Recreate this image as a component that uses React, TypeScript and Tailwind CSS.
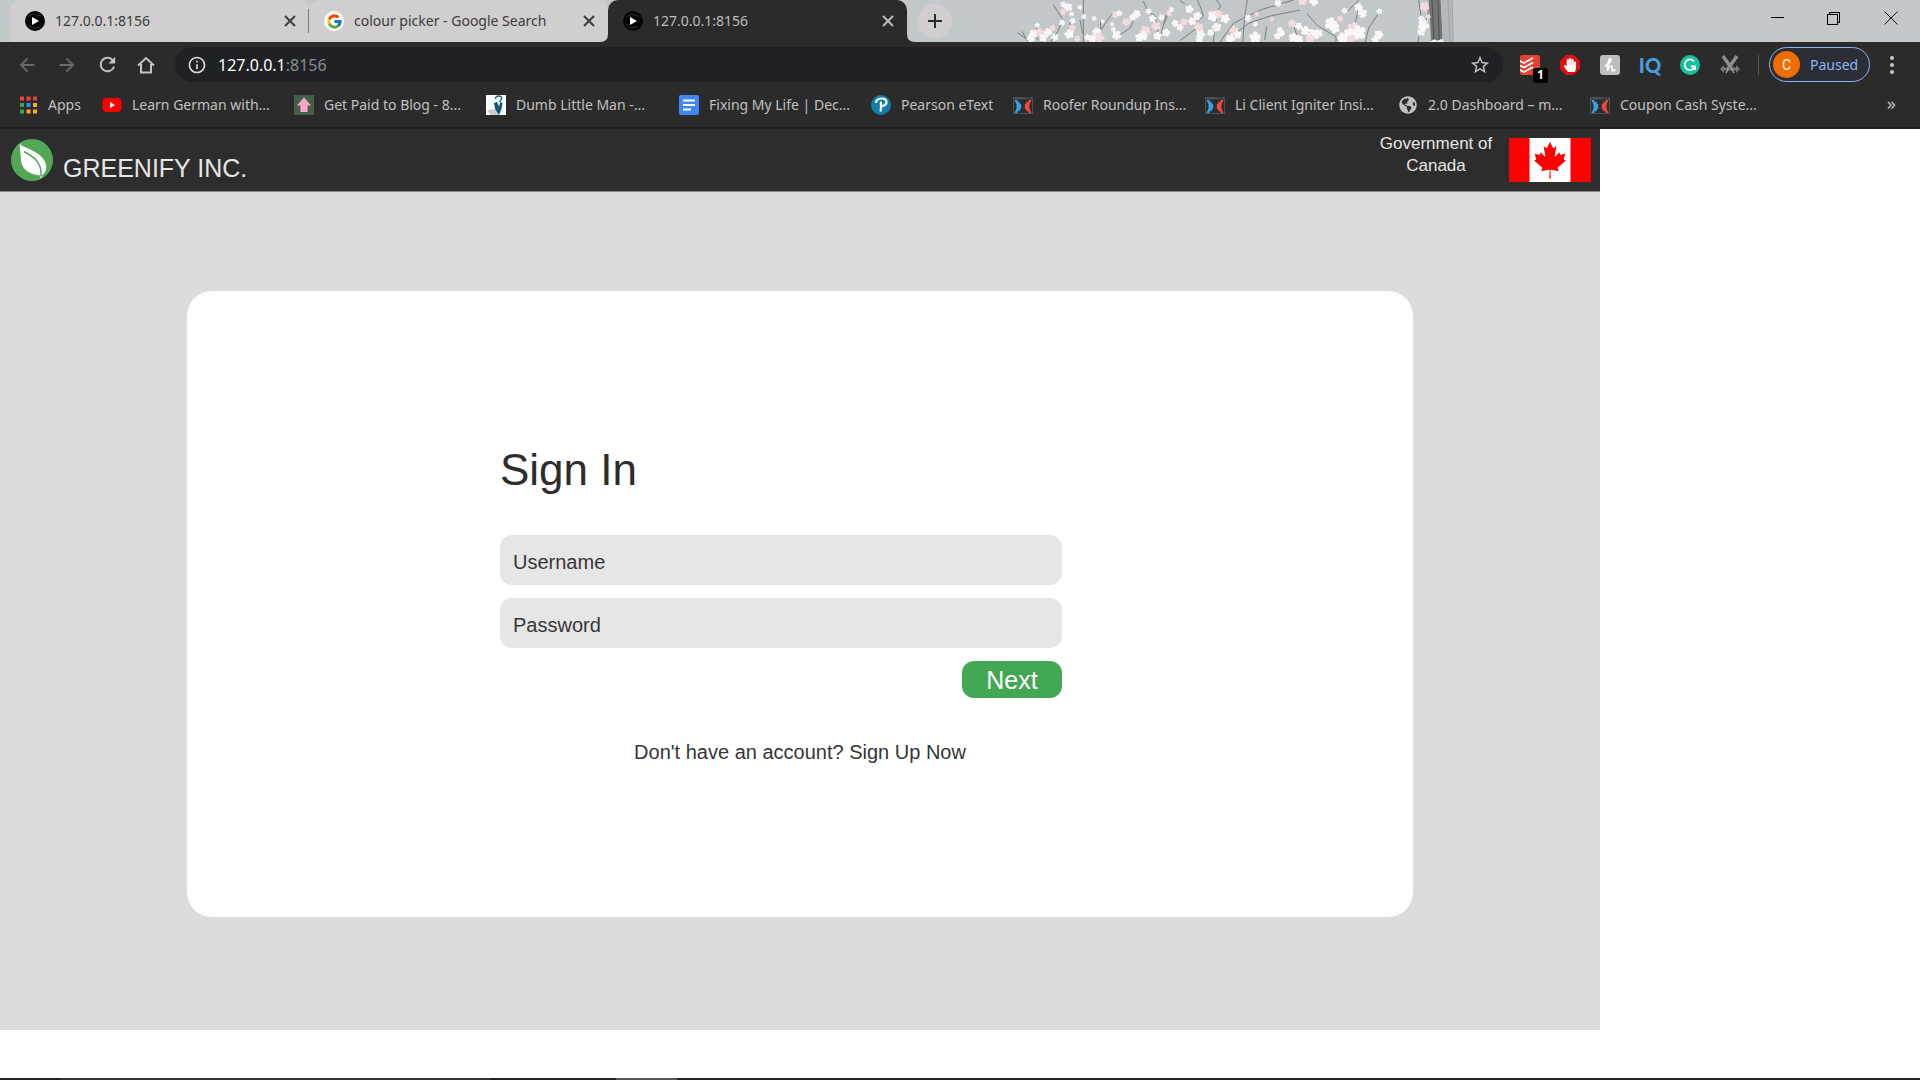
import { FcGoogle } from "react-icons/fc";
import { FaHandPaper, FaGlobeAmericas } from "react-icons/fa";
import { MdArrowBack, MdArrowForward, MdRefresh, MdOutlineInfo, MdStarBorder } from "react-icons/md";

const tabs = [
  { title: "127.0.0.1:8156", icon: <PlayIcon />, active: false },
  { title: "colour picker - Google Search", icon: <GoogleIcon />, active: false },
  { title: "127.0.0.1:8156", icon: <PlayIcon />, active: true },
];

const bookmarks = [
  { label: "Apps", icon: <AppsIcon />, width: "w-[82px]" },
  { label: "Learn German with...", icon: <YoutubeIcon />, width: "w-[192px]" },
  { label: "Get Paid to Blog - 8...", icon: <ArrowUpIcon />, width: "w-[192px]" },
  { label: "Dumb Little Man -...", icon: <ManIcon />, width: "w-[193px]" },
  { label: "Fixing My Life | Dec...", icon: <DocsIcon />, width: "w-[192px]" },
  { label: "Pearson eText", icon: <PearsonIcon />, width: "w-[142px]" },
  { label: "Roofer Roundup Ins...", icon: <FunnelIcon />, width: "w-[192px]" },
  { label: "Li Client Igniter Insi...", icon: <FunnelIcon />, width: "w-[193px]" },
  {
    label: "2.0 Dashboard – m...",
    icon: <FaGlobeAmericas className="h-[18px] w-5 text-[#c0c0c0]" />,
    width: "w-[192px]",
  },
  { label: "Coupon Cash Syste...", icon: <FunnelIcon />, width: "w-[192px]" },
];

function PlayIcon() {
  return (
    <svg viewBox="0 0 20 20" className="size-5 shrink-0">
      <circle cx="10" cy="10" r="10" fill="#050505" />
      <path d="M3 6l5-3 8 2M3 13l4 4 8-1" stroke="#2c2c2c" fill="none" />
      <path d="M7 6l7 4-7 4z" fill="#fff" />
    </svg>
  );
}

function GoogleIcon() {
  return (
    <span className="flex size-5 shrink-0 items-center justify-center rounded-full bg-white">
      <FcGoogle className="size-[17px]" />
    </span>
  );
}

function AppsIcon() {
  const colors = ["#ea4335", "#ea4335", "#ea4335", "#34a853", "#2f8df5", "#fbaf10", "#34a853", "#fbaf10", "#fbaf10"];
  return (
    <svg viewBox="0 0 18 18" className="size-[18px] shrink-0">
      {colors.map((c, i) => (
        <rect key={i} x={(i % 3) * 6.5} y={Math.floor(i / 3) * 6.5 + 0.5} width="4" height="4" fill={c} />
      ))}
    </svg>
  );
}

function YoutubeIcon() {
  return (
    <svg viewBox="0 0 20 20" className="size-5 shrink-0">
      <rect x="0.5" y="3" width="19" height="14" rx="4" fill="#f00" />
      <path d="M8 7l5 3-5 3z" fill="#fff" />
    </svg>
  );
}

function ArrowUpIcon() {
  return (
    <svg viewBox="0 0 20 20" className="size-5 shrink-0">
      <path d="M0 0h20v20H0z" fill="#45604a" />
      <path d="M10 2.500l7 8h-3.500V17h-7v-6.500H3z" fill="#ffa9c6" />
    </svg>
  );
}

function ManIcon() {
  return (
    <svg viewBox="0 0 20 20" className="size-5 shrink-0">
      <path d="M0 0h20v20H0z" fill="#fff" />
      <path d="M1 16q3-3 9-1l3 5H5z" fill="#ccc" />
      <path d="M9.500 4q0-3 3-3 3.500 0 3 3-.5 2-2.500 3" stroke="#1b6584" strokeWidth="1.300" fill="none" />
      <path d="M8 8l3-1 2 3 1.500-3 2 1-1 6-2.500 6-4-6z" fill="#12577a" />
      <path d="M11.500 7.500h2.500l-1 4z" fill="#fff" />
    </svg>
  );
}

function DocsIcon() {
  return (
    <svg viewBox="0 0 20 20" className="size-5 shrink-0">
      <rect width="20" height="20" rx="2" fill="#4285f4" />
      <path d="M4 5.500h12M4 10h12M4 14.500h8" stroke="#fff" strokeWidth="2" />
    </svg>
  );
}

function PearsonIcon() {
  return (
    <svg viewBox="0 0 20 20" className="size-5 shrink-0">
      <circle cx="10" cy="10" r="10" fill="#117fa5" />
      <path
        d="M5 8q0-4.500 6-4.500 4.500 0 4.500 3.600 0 3.400-5 4.200M9.800 6.500q.6 5-.3 10"
        stroke="#fff"
        strokeWidth="2.200"
        fill="none"
      />
    </svg>
  );
}

function FunnelIcon() {
  return (
    <svg viewBox="0 0 20 20" className="size-5 shrink-0">
      <path d="M0 2h20v17H0z" fill="#4c4f53" />
      <path d="M1 4.500h18V18H1z" fill="#2b2d30" />
      <path d="M13 3h1M15 3h1M17 3h1" stroke="#222" />
      <path d="M1.500 5H4l1 2 1.500-.3.500 2 1.500 1-.5 1.800.5 1.800-1.500 1-.5 2-1.500-.3-1 2H1.500l2-4.500v-4z" fill="#3da0e0" />
      <path d="M18.500 5H16l-1 2-1.500-.3-.5 2-1.500 1 .5 1.800-.5 1.800 1.500 1 .5 2 1.500-.3 1 2h2.500l-2-4.500v-4z" fill="#ee4b35" />
    </svg>
  );
}

// Theme artwork behind the tab strip
function Blossoms() {
  const petals = [
    [-7, -3],
    [1, -8],
    [8, -2],
    [4, 7],
    [-5, 5],
    [0, 0],
  ];
  const flowers = [
    [112, 76, 5], [100, 102, 9], [118, 96, 8], [92, 116, 8], [130, 112, 8], [145, 96, 8], [158, 84, 6], [165, 112, 7],
    [190, 14, 6], [205, 22, 8], [190, 36, 6], [214, 42, 5], [186, 68, 6], [218, 62, 6], [216, 84, 7], [208, 102, 9],
    [240, 22, 5], [252, 50, 5], [232, 116, 6], [262, 112, 6], [282, 56, 5], [290, 96, 9], [298, 112, 10], [276, 116, 8],
    [308, 64, 4], [336, 72, 4], [346, 44, 7], [358, 40, 6], [350, 106, 9], [340, 88, 5], [378, 66, 8], [398, 52, 7],
    [410, 42, 8], [418, 112, 8], [436, 92, 10], [430, 108, 9], [446, 34, 6], [458, 56, 7], [468, 78, 9], [472, 108, 8],
    [484, 52, 6], [498, 98, 8], [506, 40, 6], [514, 28, 5], [526, 70, 7], [540, 82, 7], [552, 66, 7], [568, 28, 8],
    [576, 64, 8], [592, 48, 8], [596, 82, 9], [602, 104, 9], [598, 120, 7], [640, 48, 11], [656, 42, 8], [676, 56, 9],
    [650, 82, 9], [632, 98, 7], [702, 92, 9], [690, 116, 9], [712, 104, 8], [744, 54, 7], [770, 42, 5], [766, 72, 5],
    [766, 112, 11], [834, 10, 7], [816, 58, 4], [840, 90, 6], [832, 108, 7], [846, 100, 6], [876, 70, 8], [896, 78, 7],
    [880, 112, 9], [896, 118, 9], [908, 4, 8], [942, 4, 9], [916, 92, 9], [940, 104, 11], [930, 116, 9], [956, 100, 8],
    [992, 70, 12], [1004, 84, 10], [1020, 56, 6], [1034, 32, 6], [1076, 22, 8], [1088, 40, 9], [1060, 86, 12],
    [1076, 98, 14], [1046, 100, 10], [1028, 114, 11], [1052, 116, 8], [1138, 34, 6], [1136, 104, 9], [1126, 118, 7],
    [1274, 20, 9], [1264, 56, 6], [1270, 76, 11], [1264, 96, 8], [1284, 50, 5],
  ];
  return (
    <svg viewBox="0 0 1380 126" className="ml-12 h-[42px] w-[460px] shrink-0">
      <path
        d="M52 98l40 28M66 94l18 32M110 80l2 40M160 14l28 44-14 36-22 32M250 0v126M212 60l-8 40M240 60l8 40M302 62v30l16-26 20-26M350 112l40-28 20-40M430 4l14 30 22 14 8 60M500 40l-16 60M510 30l-18 40M538 0l16 12M592 0l12 28 6 20-16 16M540 122l48-36M640 126l10-80M650 0l12 18-10 16M660 126l40-56 80-40 100-30M690 110l60-42 60-20 90-18M742 0l-8 50-6 76M800 80l-6 40M880 70l14 50M920 40l34 38 54 32v16M1076 0l-34 34M1076 24l-16 70M1142 30l-36 54-10 42M1256 0l10 70-12 56M1286 30l-16 70"
        fill="none"
        stroke="#6b7072"
        strokeWidth="2.500"
      />
      <path d="M1286 0h36l6 126h-34z" fill="#737475" />
      <path d="M1296 0l6 126M1314 0l4 126" stroke="#4e4f50" strokeWidth="3" />
      <path d="M1324 0h34v126h-30z" fill="#b4b8ba" />
      <path d="M1344 0l6 126M1356 0l4 126" stroke="#94989a" strokeWidth="2" />
      {flowers.map(([x, y, r], i) => (
        <g
          key={i}
          transform={`translate(${x} ${y}) scale(${r / 8}) rotate(${i * 37})`}
          fill={i % 4 === 2 ? "#f6dcdf" : "#fbf8f9"}
        >
          {petals.map(([px, py], k) => (
            <circle key={k} cx={px} cy={py} r="5" />
          ))}
        </g>
      ))}
      <path d="M1290 126l12-8 10 4 14-6 6 10z" fill="#f4f4f4" />
    </svg>
  );
}

function TabStrip() {
  return (
    <div className="flex h-[42px] items-stretch overflow-hidden bg-gradient-to-b from-[#c3c7ca] to-[#c3c8c9] pl-[10px]">
      <div role="tablist" className="flex">
        {tabs.map((tab, i) => (
          <div
            key={i}
            role="tab"
            aria-selected={tab.active}
            className={`relative flex w-[299px] items-center rounded-t-[10px] pr-[7px] pl-[15px] text-sm ${
              tab.active ? "z-10 bg-[#2b2b2b] text-[#bdbdbd]" : "bg-[#d0cece] text-[#3c3c3c]"
            }`}
          >
            {tab.active && (
              <>
                <svg viewBox="0 0 8 8" className="absolute bottom-0 -left-2 size-2">
                  <path d="M8 0v8H0q8 0 8-8" fill="#2b2b2b" />
                </svg>
                <svg viewBox="0 0 8 8" className="absolute -right-2 bottom-0 size-2">
                  <path d="M0 0v8h8q-8 0-8-8" fill="#2b2b2b" />
                </svg>
              </>
            )}
            {tab.icon}
            <span className="ml-[10px] flex-1 truncate">{tab.title}</span>
            <button aria-label="Close tab" className="flex size-6 items-center justify-center">
              <svg viewBox="0 0 12 12" className="size-3" stroke="currentColor" strokeWidth="2">
                <path d="M1 1l10 10M11 1L1 11" />
              </svg>
            </button>
            {i === 0 && <span className="absolute right-0 h-6 w-px bg-[#7a7a7a]" />}
          </div>
        ))}
      </div>
      <button
        aria-label="New tab"
        className="mt-1 ml-[11px] flex size-[34px] items-center justify-center rounded-full bg-[#d0cece]"
      >
        <svg viewBox="0 0 16 16" className="size-4" stroke="#2b2b2b" strokeWidth="2">
          <path d="M8 1v14M1 8h14" />
        </svg>
      </button>
      <Blossoms />
      <div className="ml-auto flex h-9">
        <button aria-label="Minimize" className="flex w-14 items-center justify-center">
          <svg viewBox="0 0 14 14" className="size-[14px]" stroke="#000" shapeRendering="crispEdges">
            <path d="M0 6.500h13" />
          </svg>
        </button>
        <button aria-label="Restore" className="flex w-14 items-center justify-center">
          <svg viewBox="0 0 14 14" className="size-[14px]" stroke="#000" fill="none" shapeRendering="crispEdges">
            <path d="M.5 3.500h10v10H.5zM2.500 3.500v-2h10v10h-2" />
          </svg>
        </button>
        <button aria-label="Close" className="mr-px flex w-[57px] items-center justify-center">
          <svg viewBox="0 0 14 14" className="size-[14px]" stroke="#111">
            <path d="M.5.500l13 13M13.500.500l-13 13" />
          </svg>
        </button>
      </div>
    </div>
  );
}

function Extensions() {
  return (
    <div className="flex items-center gap-5">
      <button aria-label="Todoist" className="relative size-5">
        <svg viewBox="0 0 20 20" className="size-5">
          <rect width="20" height="20" rx="2" fill="#e44332" />
          <path d="M0 6l4 2 9-5M0 10.500l4 2 9-5M0 15l4 2 9-5" stroke="#fff" strokeWidth="1.600" fill="none" />
        </svg>
        <span className="absolute top-[13px] left-[13px] flex h-[15px] w-[15px] items-center justify-center rounded-[3px] bg-black text-xs font-bold text-white">
          1
        </span>
      </button>
      <button aria-label="AdBlock" className="relative flex size-5 items-center justify-center">
        <svg viewBox="0 0 20 20" className="absolute inset-0 size-5">
          <path d="M6 0h8l6 6v8l-6 6H6l-6-6V6z" fill="#e40d0d" />
        </svg>
        <FaHandPaper className="relative size-[14px] text-white" />
      </button>
      <button aria-label="Honey">
        <svg viewBox="0 0 20 20" className="size-5">
          <rect width="20" height="20" rx="3" fill="#bdbdbd" />
          <path
            d="M5 11q5-2 6-6 0-2-1.500-1-2 3-2 12 1-5 3.500-5 1.500 0 1 2.500-.5 2.500 1 2.500 1.500 0 2-2"
            stroke="#fff"
            strokeWidth="1.700"
            fill="none"
          />
        </svg>
      </button>
      <button
        aria-label="Keywords"
        className="flex size-5 items-center justify-center font-['Lato'] text-xl leading-5 font-black text-[#4b9cdb]"
      >
        IQ
      </button>
      <button aria-label="Grammarly">
        <svg viewBox="0 0 20 20" className="size-5">
          <circle cx="10" cy="10" r="10" fill="#15c39a" />
          <path d="M14 6.300A5.300 5.300 0 1 0 15 11.500h-4M15 11v4" stroke="#fff" strokeWidth="1.800" fill="none" />
        </svg>
      </button>
      <button aria-label="Snip">
        <svg viewBox="0 0 20 20" className="size-5">
          <path d="M3 1l9 13M17 1L8 14" stroke="#8f8f8f" strokeWidth="3.500" />
          <path d="M0 14l4-4v2.500h12V10l4 4-4 4v-2.500H4V18z" fill="#777" />
          <path d="M8.500 13.500L6 18M11.500 13.500L14 18" stroke="#a5a5a5" strokeWidth="1.500" />
        </svg>
      </button>
    </div>
  );
}

function Toolbar() {
  return (
    <div className="flex h-[45px] items-center pr-[26px] pl-4 text-[#c4c4c4]">
      <div className="flex items-center gap-[18px]">
        <button aria-label="Back">
          <MdArrowBack className="size-[22px] text-[#6b6b6b]" />
        </button>
        <button aria-label="Forward">
          <MdArrowForward className="size-[22px] text-[#6b6b6b]" />
        </button>
        <button aria-label="Reload">
          <MdRefresh className="size-[23px]" />
        </button>
        <button aria-label="Home">
          <svg viewBox="0 0 18 18" className="size-[18px]" fill="none" stroke="currentColor" strokeWidth="2">
            <path d="M1 9.500L9 2l8 7.500M4 8v8.500h10V8" />
          </svg>
        </button>
      </div>
      <div className="ml-5 flex h-[35px] flex-1 items-center rounded-full bg-[#202124] pr-3 pl-3">
        <MdOutlineInfo className="size-5 shrink-0 text-[#dcdcdc]" />
        <div className="ml-[11px] flex-1 text-base">
          <span className="text-white">127.0.0.1</span>
          <span className="text-[#8b8c8e]">:8156</span>
        </div>
        <button aria-label="Bookmark this page">
          <MdStarBorder className="size-[22px]" />
        </button>
      </div>
      <div className="ml-[17px]">
        <Extensions />
      </div>
      <span className="ml-[18px] h-5 w-px bg-[#565656]" />
      <button className="ml-[10px] flex h-[35px] w-[101px] items-center rounded-full border border-[#8ab4f8] bg-[#2b2e35] pl-[3px] text-[#8ab4f8]">
        <span className="flex size-[27px] items-center justify-center rounded-full bg-[#ef6c00] font-['Roboto'] text-sm text-white">
          C
        </span>
        <span className="ml-[10px] text-sm">Paused</span>
      </button>
      <button aria-label="Menu" className="ml-5">
        <svg viewBox="0 0 4 18" className="h-[18px] w-1" fill="currentColor">
          <circle cx="2" cy="2" r="2" />
          <circle cx="2" cy="9" r="2" />
          <circle cx="2" cy="16" r="2" />
        </svg>
      </button>
    </div>
  );
}

function BookmarksBar() {
  return (
    <div className="flex h-[42px] items-center border-b-2 border-[#202020] pr-6 pb-1 pl-5 text-sm text-[#c0c0c0]">
      {bookmarks.map((b) => (
        <a key={b.label} href="#" className={`flex shrink-0 items-center gap-[10px] whitespace-nowrap ${b.width}`}>
          {b.icon}
          {b.label}
        </a>
      ))}
      <button aria-label="More bookmarks" className="ml-auto pb-1 text-lg leading-5">
        »
      </button>
    </div>
  );
}

function LeafLogo() {
  return (
    <svg viewBox="0 0 42 42" className="size-[42px]">
      <circle cx="21" cy="21" r="21" fill="#52a854" />
      <path
        d="M8.500 4.500C11 9 26 10 33 21c4 6 2.500 12-2 15.500l-.5 2.500h-1l0-2.500C20 36 11 31 10 22 9.500 15 9 9 8.500 4.500z"
        fill="#fff"
      />
      <path d="M13 12.500c9 5 18 10 17 24.500" stroke="#52a854" strokeWidth="1.500" fill="none" />
    </svg>
  );
}

function CanadaFlag() {
  return (
    <svg viewBox="0 0 9600 4800" preserveAspectRatio="none" className="h-11 w-[82px]" role="img" aria-label="Canada">
      <path d="M0 0h9600v4800H0z" fill="#f00" />
      <path
        d="m2400 0h4800v4800h-4800zm2490 4430-45-863a95 95 0 0 1 111-98l859 151-116-320a65 65 0 0 1 20-73l941-762-212-99a65 65 0 0 1-34-79l186-572-542 115a65 65 0 0 1-73-38l-105-247-423 454a65 65 0 0 1-111-57l204-1052-327 189a65 65 0 0 1-91-27l-332-652-332 652a65 65 0 0 1-91 27l-327-189 204 1052a65 65 0 0 1-111 57l-423-454-105 247a65 65 0 0 1-73 38l-542-115 186 572a65 65 0 0 1-34 79l-212 99 941 762a65 65 0 0 1 20 73l-116 320 859-151a95 95 0 0 1 111 98l-45 863z"
        fill="#fff"
      />
    </svg>
  );
}

function SignInPage() {
  return (
    <div className="w-5/6 bg-[#dcdcdc] pb-[113px] font-['Liberation_Sans',sans-serif]">
      <header className="flex h-[63px] items-center border-b border-[#8c8c8c] bg-[#2d2d2d] pr-[9px] pl-[11px] text-[#e6e6e6]">
        <LeafLogo />
        <span className="ml-[10px] self-end pb-[9px] text-[25px] leading-7">GREENIFY INC.</span>
        <span className="ml-auto w-[120px] self-start pt-1 text-center text-[17px] leading-[22px]">
          Government of Canada
        </span>
        <span className="ml-[13px]">
          <CanadaFlag />
        </span>
      </header>
      <main className="mx-auto mt-[99px] min-h-[626px] max-w-[1226px] rounded-[25px] bg-white pt-[155px]">
        <form className="ml-[313px] w-[562px]" onSubmit={(e) => e.preventDefault()}>
          <h1 className="text-[44px] leading-12 text-[#2d2d2d]">Sign In</h1>
          <div className="mt-[41px] flex flex-col gap-[13px] text-xl">
            <input
              type="text"
              placeholder="Username"
              aria-label="Username"
              className="h-[50px] rounded-[12px] bg-[#e6e6e6] px-[13px] pt-[5px] text-[#2d2d2d] placeholder:text-[#363636]"
            />
            <input
              type="password"
              placeholder="Password"
              aria-label="Password"
              className="h-[50px] rounded-[12px] bg-[#e6e6e6] px-[13px] pt-[5px] text-[#2d2d2d] placeholder:text-[#363636]"
            />
            <button
              type="submit"
              className="h-[37px] w-[100px] self-end rounded-[12px] bg-[#43a853] text-[25px] leading-7 text-white"
            >
              Next
            </button>
          </div>
        </form>
        <p className="mt-10 text-center text-xl text-[#363636]">
          Don't have an account? <a href="#">Sign Up Now</a>
        </p>
      </main>
    </div>
  );
}

export default function App() {
  return (
    <div className="flex min-h-screen flex-col bg-white">
      <div className="bg-[#2b2b2b] font-['Noto_Sans',sans-serif]">
        <TabStrip />
        <Toolbar />
        <BookmarksBar />
      </div>
      <SignInPage />
      {/* Top edge of the taskbar */}
      <div className="mt-auto flex h-[2px] bg-[#222326]">
        <span className="ml-[60px] w-[430px] bg-[#353535]" />
        <span className="ml-[126px] w-[61px] bg-[#565656]" />
      </div>
    </div>
  );
}
